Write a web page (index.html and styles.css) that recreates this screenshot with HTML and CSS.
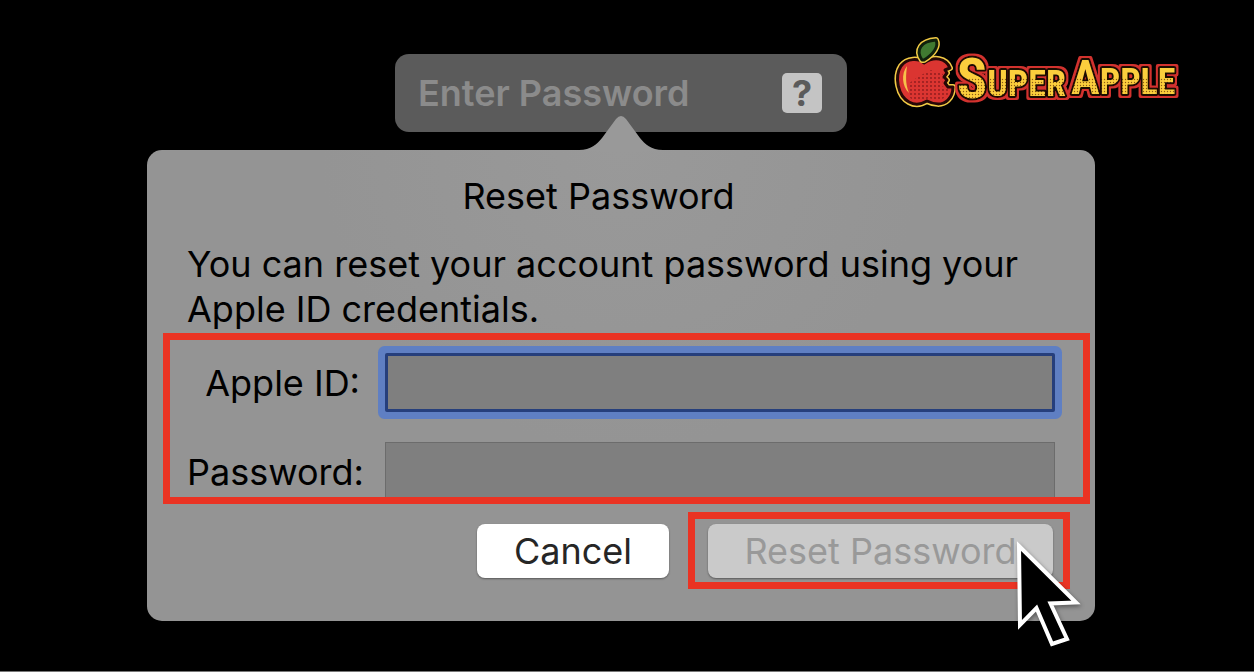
FILE: index.html
```html
<!DOCTYPE html>
<html lang="en">
<head>
	<meta charset="utf-8">
	<title>Reset Password</title>
	<link rel="stylesheet" href="styles.css">
</head>
<body>
	<div class="page">
		<header class="top">
			<div class="login">
				<input class="login-input" type="password" placeholder="Enter Password" aria-label="Enter Password">
				<button class="hint" type="button" aria-label="Password help">?</button>
			</div>
			<a class="logo" href="#" aria-label="Super Apple">
				<svg width="290" height="76" viewBox="0 0 290 76">
					<defs>
						<pattern id="dots" width="3" height="3" patternUnits="userSpaceOnUse">
							<circle cx="1.5" cy="1.5" r="0.7" fill="#8c5a14"/>
						</pattern>
						<pattern id="gold" width="290" height="76" patternUnits="userSpaceOnUse">
							<rect width="290" height="76" fill="#fbce3c"/>
							<rect y="42" width="290" height="34" fill="url(#dots)"/>
						</pattern>
						<pattern id="seeds" width="4" height="4" patternUnits="userSpaceOnUse">
							<circle cx="2" cy="2" r="0.9" fill="#8a1a1b"/>
						</pattern>
						<filter id="outline" x="-10%" y="-20%" width="120%" height="140%">
							<feMorphology in="SourceAlpha" operator="dilate" radius="2" result="fat"/>
							<feFlood flood-color="#d2332f"/>
							<feComposite in2="fat" operator="in" result="red"/>
							<feMerge>
								<feMergeNode in="red"/>
								<feMergeNode in="SourceGraphic"/>
							</feMerge>
						</filter>
					</defs>
					<!-- apple -->
					<path d="M31 27C26 22 14 22 8 30C1 41 5 60 16 66C23 70 29 68 34 65C40 68 49 70 55 64C58 61 60 56 60 51L55 51L52 47L54 44L51 41L54 37L52 34L57 32C53 22 41 20 31 27Z" fill="none" stroke="#f2cb45" stroke-width="6" stroke-linejoin="round"/>
					<path d="M31 27C26 22 14 22 8 30C1 41 5 60 16 66C23 70 29 68 34 65C40 68 49 70 55 64C58 61 60 56 60 51L55 51L52 47L54 44L51 41L54 37L52 34L57 32C53 22 41 20 31 27Z" fill="#db3531" stroke="#260806" stroke-width="3" stroke-linejoin="round"/>
					<path d="M38 34L50 38L49 50L57 54C55 62 48 66 36 62C28 67 17 66 15 58L15 48L26 40Z" fill="url(#seeds)"/>
					<path d="M14 30C8 38 9 50 16 57C12 47 13 39 14 30Z" fill="#f7c24a"/>
					<!-- leaf -->
					<path d="M29 24C22 14 28 5 43 4C46 10 41 18 31 24Z" fill="none" stroke="#f2cb45" stroke-width="6" stroke-linejoin="round"/>
					<path d="M29 24C22 14 28 5 43 4C46 10 41 18 31 24Z" fill="#407a31" stroke="#10200c" stroke-width="3" stroke-linejoin="round"/>
					<g class="word" filter="url(#outline)">
						<text x="64" y="62"><tspan class="cap-s">S</tspan><tspan y="60">UPER</tspan></text>
						<text x="178" y="58"><tspan class="cap-a">A</tspan>PPLE</text>
					</g>
				</svg>
			</a>
		</header>

		<form class="popover">
			<svg class="arrow" width="84" height="36" viewBox="0 0 84 36">
				<path d="M0 36V35C12 35 18 29 23 23L37 4Q42 -2 47 4L61 23C66 29 72 35 84 35V36Z" fill="#999"/>
			</svg>
			<h1>Reset Password</h1>
			<p>You can reset your account password using your Apple ID credentials.</p>
			<div class="fields">
				<label for="apple-id">Apple ID:</label>
				<input class="field active" id="apple-id" type="text">
				<label for="password">Password:</label>
				<input class="field cut" id="password" type="password">
			</div>
			<div class="buttons">
				<button class="button" type="button">Cancel</button>
				<div class="marked">
					<button class="button reset" type="submit" disabled>Reset Password</button>
				</div>
			</div>
			<svg class="cursor" width="72" height="112" viewBox="0 0 72 112">
				<path d="M6 8L63 64.500L37.500 65.500L54 101L39 106L23.500 70L7 87Z" fill="#000" stroke="#fff" stroke-width="4"/>
			</svg>
		</form>
	</div>
</body>
</html>
```
FILE: styles.css
```css
* {
	box-sizing: border-box;
}

body {
	margin: 0;
	background-color: #000;
	font-family: Inter, "Liberation Sans", sans-serif;
	font-size: 36px;
	color: #000;
}

.page {
	min-height: 100vh;
	padding: 36px 12px 48px 0;
	border-bottom: 1px solid #777;
}

.top {
	display: grid;
	grid-template-columns: 1fr 452px 1fr;
	align-items: start;
	margin-bottom: 18px;
}

.login {
	grid-column: 2;
	display: flex;
	align-items: center;
	height: 78px;
	margin-top: 18px;
	padding: 0 25px 0 23px;
	border-radius: 14px;
	background-color: #5b5b5b;
}

.login-input {
	flex: 1;
	min-width: 0;
	padding: 0;
	border: none;
	outline: none;
	background: none;
	font-family: inherit;
	font-size: 36px;
	font-weight: 600;
	color: #fff;
}

.login-input::placeholder {
	color: #8b8b8b;
	opacity: 1;
}

.hint {
	width: 40px;
	height: 40px;
	padding: 0;
	border: none;
	border-radius: 5px;
	background-color: #c4c4c4;
	font-family: inherit;
	font-size: 36px;
	font-weight: 700;
	line-height: 40px;
	color: #5b5b5b;
}

.logo {
	margin-left: 46px;
}

.logo svg {
	display: block;
}

.word {
	font-family: "Liberation Sans Narrow", "Roboto Condensed", "Open Sans Condensed", "DejaVu Sans Condensed", sans-serif;
	font-size: 36px;
	font-weight: 700;
	fill: url(#gold);
	stroke: #1c0705;
	stroke-width: 4px;
	stroke-linejoin: round;
	paint-order: stroke;
}

.cap-s {
	font-size: 56px;
}

.cap-a {
	font-size: 48px;
}

.popover {
	position: relative;
	max-width: 948px;
	margin: 0 auto;
	padding: 24px 25px 32px 16px;
	border-radius: 15px;
	background: radial-gradient(circle at 50% 0, #999, #949494 300px);
}

.arrow {
	position: absolute;
	top: -35px;
	left: calc(50% - 42px);
}

h1 {
	margin: 0 36px 23px 0;
	font-size: 36px;
	font-weight: 400;
	line-height: 45px;
	text-align: center;
}

p {
	margin: 0 0 1px;
	padding-left: 24px;
	line-height: 45px;
}

.fields {
	display: grid;
	grid-template-columns: 173px 1fr;
	gap: 30px 25px;
	margin-right: -20px;
	padding: 13px 28px 0 17px;
	border: 7px solid #ea3323;
}

.fields label {
	line-height: 60px;
	height: 55px;
	text-align: right;
	white-space: nowrap;
}

.field {
	width: 100%;
	height: 59px;
	padding: 0 10px;
	border: 1px solid #6c6c6c;
	border-radius: 0;
	outline: none;
	background-color: #7f7f7f;
	font: inherit;
}

.active {
	border: 3px solid #263f7c;
	border-radius: 2px;
	box-shadow: 0 0 0 7px #5f7fc3;
}

.cut {
	height: 55px;
	border-bottom: none;
}

.buttons {
	display: flex;
	justify-content: flex-end;
	align-items: center;
	gap: 19px;
	margin-top: 8px;
}

.button {
	width: 192px;
	height: 54px;
	padding: 0;
	border: none;
	border-radius: 8px;
	background-color: #fff;
	box-shadow: 0 1px 2px rgba(0, 0, 0, 0.4);
	font: inherit;
	color: #262626;
}

.marked {
	padding: 5px 10px 4px 13px;
	border: 7px solid #ea3323;
}

.reset {
	display: block;
	width: 345px;
	background-color: #cacaca;
	color: #999;
}

.cursor {
	position: absolute;
	right: 10px;
	bottom: -29px;
	filter: drop-shadow(1px 2px 2px rgba(0, 0, 0, 0.4));
}
```
